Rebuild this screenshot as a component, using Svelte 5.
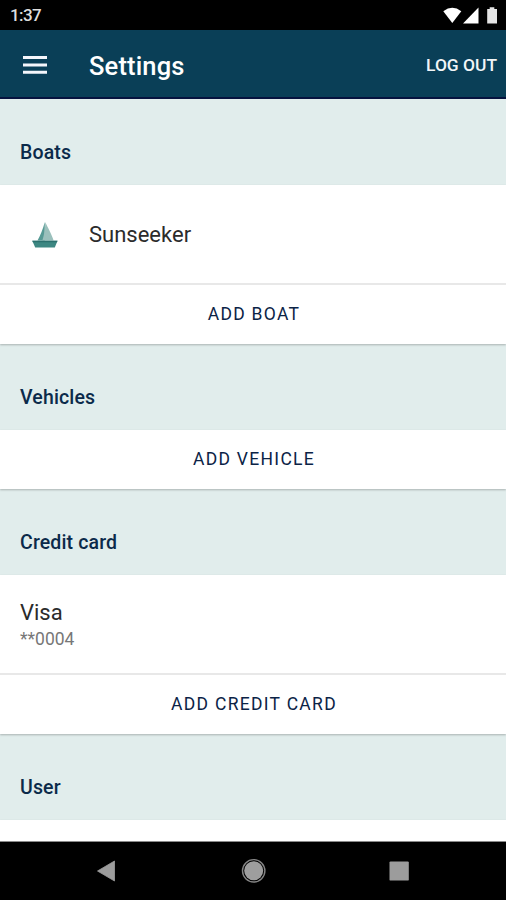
<script lang="ts">
	type Item = { title: string; detail?: string; icon?: string };
	type Section = { title: string; items: Item[]; action?: string };

	let sections: Section[] = [
		{ title: 'Boats', items: [{ title: 'Sunseeker', icon: 'boat' }], action: 'ADD BOAT' },
		{ title: 'Vehicles', items: [], action: 'ADD VEHICLE' },
		{ title: 'Credit card', items: [{ title: 'Visa', detail: '**0004' }], action: 'ADD CREDIT CARD' },
		{ title: 'User', items: [{ title: '' }] }
	];
</script>

<div class="screen">
	<div class="status-bar">
		<span class="time">1:37</span>
		<svg width="56" height="18" viewBox="0 0 56 18">
			<path d="M0.3 4.2Q9.3 -2.7 18.3 4.2L9.3 16Z" fill="#fff" />
			<path d="M35.5 0.5V16.5H20Z" fill="#fff" />
			<path d="M44.2 2H46.7V0.3H51.3V2H54V16.5H44.2Z" fill="#e4e4e4" />
		</svg>
	</div>

	<header class="app-bar">
		<button class="menu" aria-label="Menu">
			<svg width="24" height="20" viewBox="0 0 24 20">
				<path d="M0 2.5H24M0 10H24M0 17.2H24" stroke="#f4f6fb" stroke-width="3" />
			</svg>
		</button>
		<h1>Settings</h1>
		<button class="logout">LOG OUT</button>
	</header>

	<main>
		{#each sections as section}
			<section>
				<h2>{section.title}</h2>
				<div class="card">
					{#each section.items as item}
						<div class="item">
							{#if item.icon === 'boat'}
								<svg class="boat" width="26" height="26" viewBox="0 0 26 26">
									<path d="M12.8 0V18.5H5.5C8 14 11 7 12.8 0Z" fill="#579a95" />
									<path d="M13.2 0C15.5 5 20 13 21.6 18.5H10.4C12.2 12.5 13.4 6 13.2 0Z" fill="#9bc0bc" />
									<path d="M0.3 18.8H25.5L22.8 25.4H3.2Z" fill="#3d8782" />
									<path d="M0.3 18.8H25.5L25 20.3H0.9Z" fill="#2b706e" />
								</svg>
							{/if}
							<div>
								<div class="title">{item.title}</div>
								{#if item.detail}
									<div class="detail">{item.detail}</div>
								{/if}
							</div>
						</div>
					{/each}
					{#if section.action}
						<button class="action">{section.action}</button>
					{/if}
				</div>
			</section>
		{/each}
	</main>

	<nav class="nav-bar">
		<svg width="506" height="58" viewBox="0 0 506 58">
			<path d="M97.5 29L114.5 19V39Z" fill="#9c9c9c" stroke="#9c9c9c" stroke-width="0.8" stroke-linejoin="round" />
			<circle cx="253.7" cy="28.8" r="11.2" fill="none" stroke="#858585" stroke-width="1.4" />
			<circle cx="253.7" cy="28.8" r="9.5" fill="#9e9e9e" />
			<rect x="389.5" y="19.4" width="19.3" height="19.2" rx="1.2" fill="#9c9c9c" />
		</svg>
	</nav>
</div>

<style>
	:global(body) {
		margin: 0;
		background: #000;
	}

	.screen {
		display: flex;
		flex-direction: column;
		width: 506px;
		height: 900px;
		overflow: hidden;
		background: #e1edec;
		font-family: Roboto, sans-serif;
	}

	button {
		padding: 0;
		border: none;
		background: none;
		font-family: inherit;
		cursor: pointer;
	}

	.status-bar {
		display: flex;
		flex: none;
		align-items: center;
		justify-content: space-between;
		height: 30px;
		padding: 0 8px 0 10px;
		box-sizing: border-box;
		background: #000;
	}

	.status-bar svg {
		margin: 1px -1px 0 0;
	}

	.time {
		color: #dedede;
		font-size: 17px;
		font-weight: 500;
		line-height: 20px;
		letter-spacing: -0.6px;
	}

	.app-bar {
		display: flex;
		flex: none;
		align-items: center;
		height: 69px;
		padding: 0 9px 0 23px;
		box-sizing: border-box;
		background: #0a3f57;
		border-bottom: 2px solid #06133f;
	}

	.menu {
		display: flex;
		width: 66px;
		margin-top: 2px;
	}

	h1 {
		flex: 1;
		margin: 4px 0 0;
		color: #fff;
		font-size: 25.5px;
		font-weight: 500;
		line-height: 30px;
		letter-spacing: 0.15px;
	}

	.logout {
		margin-top: 2px;
		color: #f2f5f7;
		font-size: 17.4px;
		font-weight: 500;
	}

	main {
		flex: 1;
		min-height: 0;
		overflow: hidden;
	}

	h2 {
		height: 86px;
		margin: 0;
		padding: 42px 20px 0;
		box-sizing: border-box;
		color: #0b2a4a;
		font-size: 19.5px;
		font-weight: 500;
		line-height: 24px;
		letter-spacing: 0.15px;
	}

	.card {
		background: #fff;
		box-shadow: 0 1px 2px rgba(0, 0, 0, 0.25);
	}

	.item {
		display: flex;
		align-items: center;
		height: 100px;
		padding: 2px 20px 0;
		box-sizing: border-box;
		border-bottom: 2px solid #e8e8e8;
	}

	.boat {
		margin: 0 31px 0 12px;
	}

	.title {
		color: #2b2b2b;
		font-size: 22px;
		line-height: 28px;
	}

	.detail {
		color: #777;
		font-size: 17.5px;
		line-height: 24px;
	}

	.action {
		display: block;
		width: 100%;
		height: 59px;
		padding: 0 0 1px 2px;
		color: #0b2346;
		font-size: 17.5px;
		letter-spacing: 1.3px;
	}

	.nav-bar {
		flex: none;
		height: 58px;
		background: #000;
		border-top: 1px solid #8a8a8a;
	}

	.nav-bar svg {
		display: block;
	}
</style>
